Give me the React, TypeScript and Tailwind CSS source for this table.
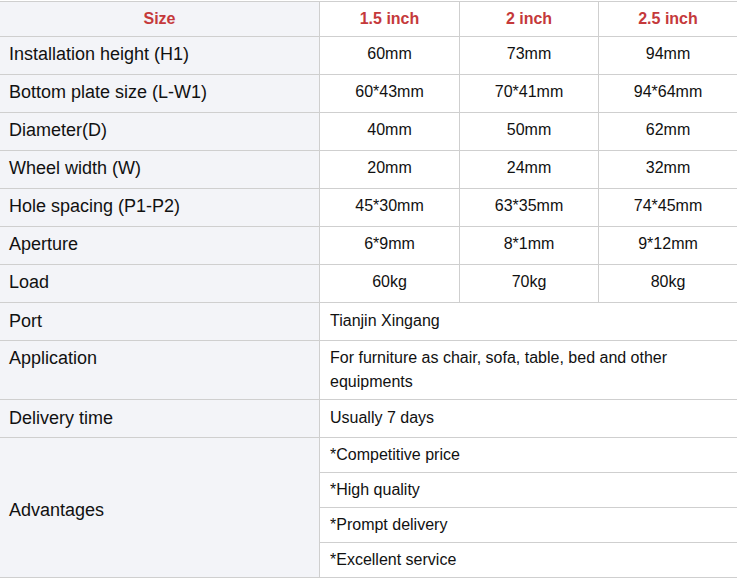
import React from 'react';

const specs: { label: string; values: string[] }[] = [
  { label: 'Installation height (H1)', values: ['60mm', '73mm', '94mm'] },
  { label: 'Bottom plate size (L-W1)', values: ['60*43mm', '70*41mm', '94*64mm'] },
  { label: 'Diameter(D)', values: ['40mm', '50mm', '62mm'] },
  { label: 'Wheel width (W)', values: ['20mm', '24mm', '32mm'] },
  { label: 'Hole spacing (P1-P2)', values: ['45*30mm', '63*35mm', '74*45mm'] },
  { label: 'Aperture', values: ['6*9mm', '8*1mm', '9*12mm'] },
  { label: 'Load', values: ['60kg', '70kg', '80kg'] },
];

const advantages = ['*Competitive price', '*High quality', '*Prompt delivery', '*Excellent service'];

const cols = 'grid grid-cols-[320px_140px_139px_1fr]';
const wide = 'grid grid-cols-[320px_1fr]';
const labelCell = 'bg-[#f3f4f8] border-r border-[#cfcfcf] pl-[9px] text-[18px] leading-6';

const App: React.FC = () => {
  return (
    <div className="min-h-screen bg-white text-[#111] font-['Liberation_Sans',Arial,sans-serif]">
      <div className="mt-px border-t border-[#cfcfcf]">
        {/* header */}
        <div className={`${cols} h-[35px] border-b border-[#cfcfcf] text-[16px] font-bold text-[#c5393b]`}>
          <div className="bg-[#f3f4f8] border-r border-[#cfcfcf] flex items-center justify-center">Size</div>
          <div className="border-r border-[#cfcfcf] flex items-center justify-center">1.5 inch</div>
          <div className="border-r border-[#cfcfcf] flex items-center justify-center">2 inch</div>
          <div className="flex items-center justify-center">2.5 inch</div>
        </div>

        {specs.map((row) => (
          <div key={row.label} className={`${cols} h-[38px] border-b border-[#cfcfcf]`}>
            <div className={`${labelCell} flex items-center pb-[3px]`}>{row.label}</div>
            {row.values.map((v, i) => (
              <div
                key={i}
                className={`flex items-center justify-center pb-[3px] text-[16px] ${i < 2 ? 'border-r border-[#cfcfcf]' : ''}`}
              >
                {v}
              </div>
            ))}
          </div>
        ))}

        <div className={`${wide} h-[38px] border-b border-[#cfcfcf]`}>
          <div className={`${labelCell} flex items-center pb-[2px]`}>Port</div>
          <div className="flex items-center pl-[10px] pb-[2px] text-[16px]">Tianjin Xingang</div>
        </div>

        <div className={`${wide} border-b border-[#cfcfcf]`}>
          <div className={`${labelCell} py-[5px]`}>Application</div>
          <div className="py-[5px] pl-[10px] pr-[10px] text-[16px] leading-6">
            For furniture as chair, sofa, table, bed and other equipments
          </div>
        </div>

        <div className={`${wide} h-[38px] border-b border-[#cfcfcf]`}>
          <div className={`${labelCell} flex items-center pb-[2px]`}>Delivery time</div>
          <div className="flex items-center pl-[10px] pb-[2px] text-[16px]">Usually 7 days</div>
        </div>

        <div className={`${wide} border-b border-[#cfcfcf]`}>
          <div className={`${labelCell} flex items-center pt-[5px]`}>Advantages</div>
          <div className="flex flex-col">
            {advantages.map((a, i) => (
              <div
                key={a}
                className={`flex items-center pl-[10px] text-[16px] ${i < advantages.length - 1 ? 'h-[35px] border-b border-[#cfcfcf]' : 'h-[34px]'}`}
              >
                {a}
              </div>
            ))}
          </div>
        </div>
      </div>
    </div>
  );
};

export default App;
